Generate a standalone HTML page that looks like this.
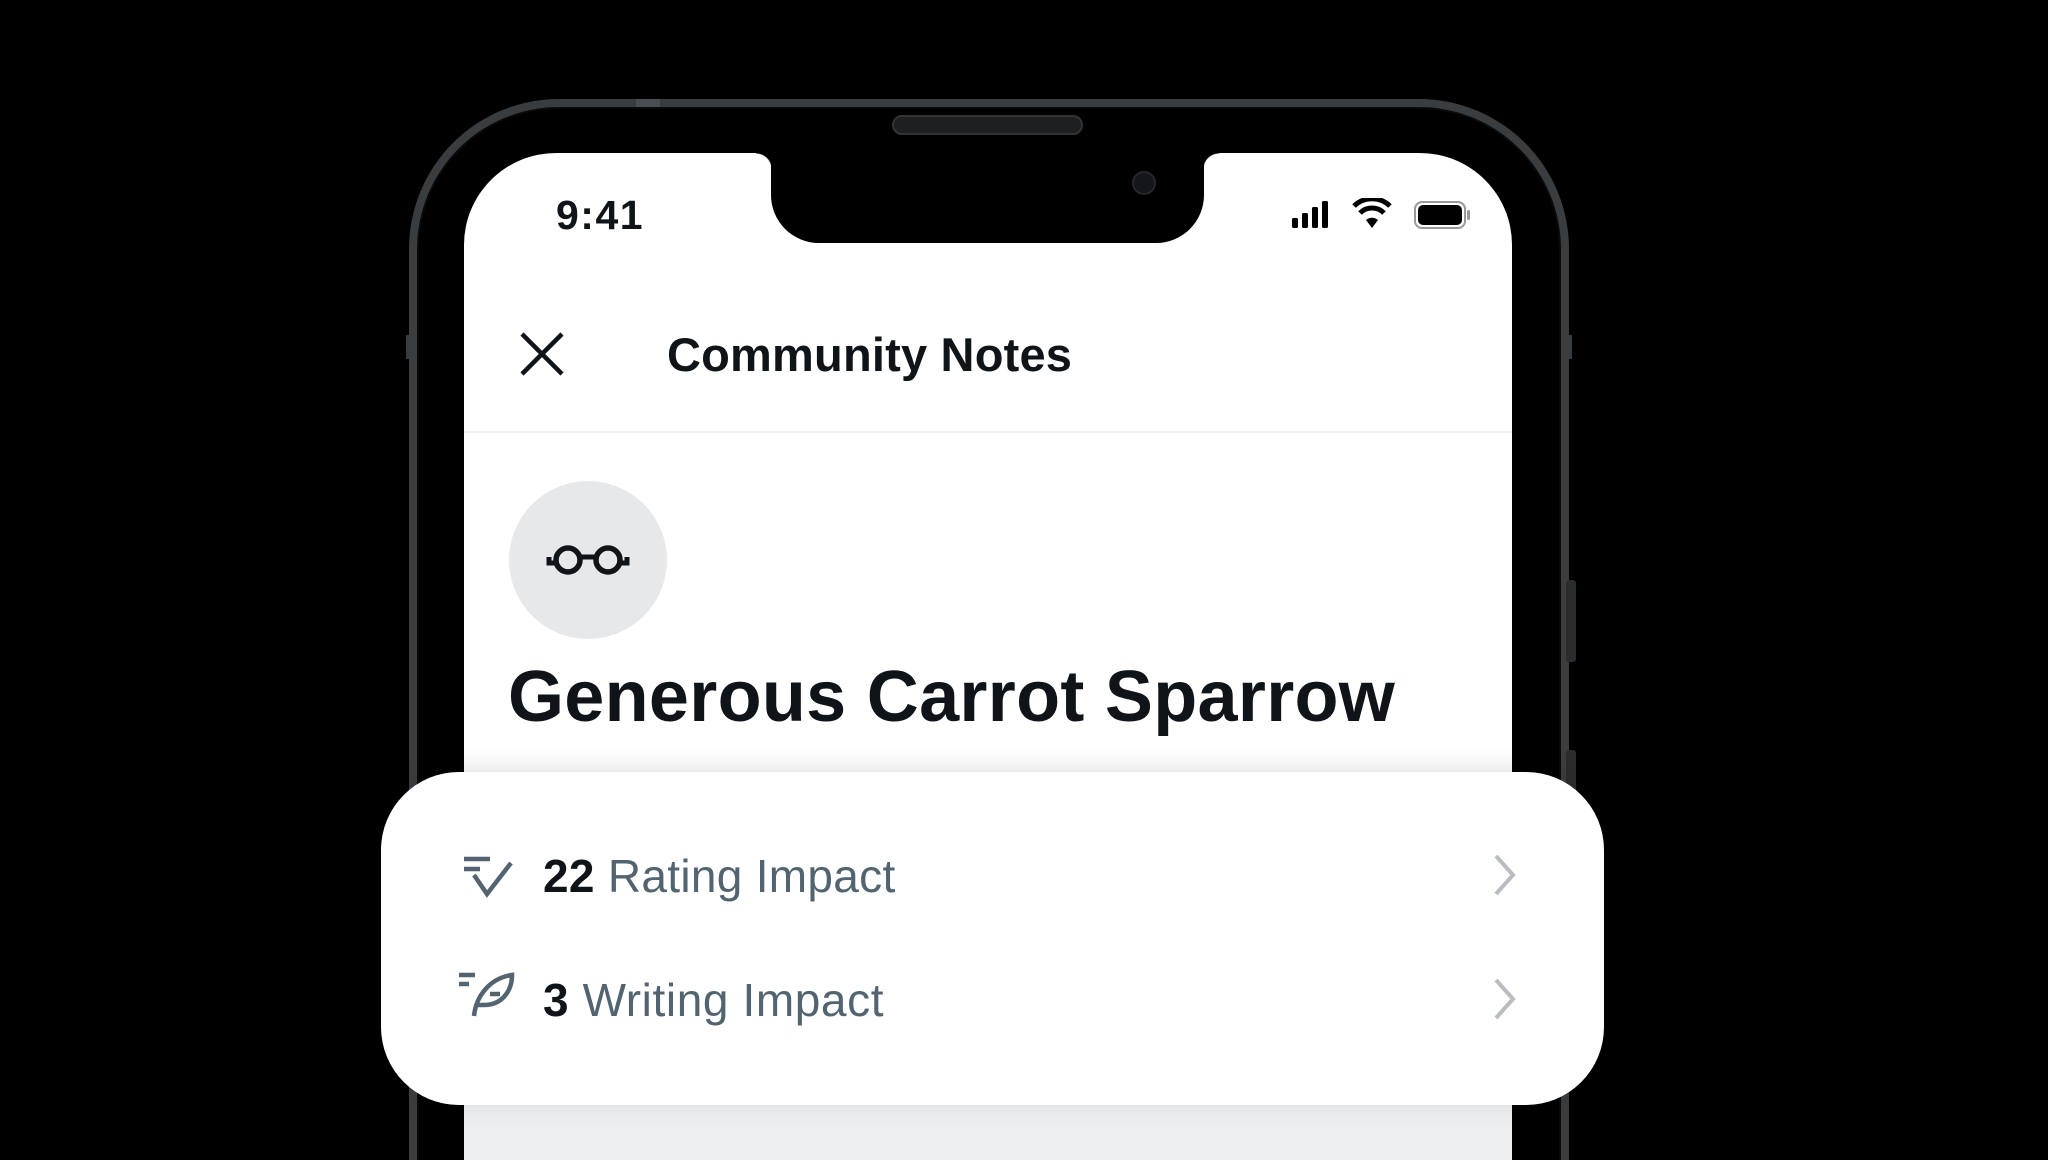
<!DOCTYPE html>
<html style="width:2048px;height:1160px;overflow:hidden"><head><style>
*{margin:0;padding:0;box-sizing:border-box}
body{width:2048px;height:1160px;background:#000;position:relative;overflow:hidden;font-family:"Liberation Sans",sans-serif}
.abs{position:absolute}
</style></head><body>
<div style="position:absolute;left:0;top:0;width:2048px;height:1160px;overflow:hidden">
<div class="abs" style="left:409px;top:99px;width:1160px;height:1061px;border-radius:150px 150px 0 0;background:#1c1d1f;border:8px solid #3a3d40;border-bottom:none;box-shadow:inset 0 0 0 4px #0a0a0a"></div>
<div class="abs" style="left:419px;top:109px;width:1140px;height:1051px;border-radius:140px 140px 0 0;background:#000"></div>
<div class="abs" style="left:1566px;top:580px;width:10px;height:82px;background:#2a2c2e;border-radius:3px"></div>
<div class="abs" style="left:1566px;top:750px;width:10px;height:140px;background:#2a2c2e;border-radius:3px"></div>
<div class="abs" style="left:406px;top:335px;width:8px;height:24px;background:#3a3d40"></div>
<div class="abs" style="left:1564px;top:335px;width:8px;height:24px;background:#3a3d40"></div>
<div class="abs" style="left:636px;top:99px;width:24px;height:8px;background:#4a4e52"></div>
<div class="abs" style="left:464px;top:153px;width:1048px;height:1007px;border-radius:92px 92px 0 0;background:#fff;overflow:hidden">
  <div class="abs" style="left:0;top:600px;width:1048px;height:407px;background:linear-gradient(#fff,#eeeff0 30px,#eeeff0)"></div>
</div>
<div class="abs" style="left:771px;top:140px;width:433px;height:103px;background:#000;border-radius:0 0 48px 48px"></div>
<div class="abs" style="left:756px;top:153px;width:16px;height:16px;background:radial-gradient(circle at 0 100%,transparent 15px,#000 16px)"></div>
<div class="abs" style="left:1203px;top:153px;width:16px;height:16px;background:radial-gradient(circle at 100% 100%,transparent 15px,#000 16px)"></div>
<div class="abs" style="left:892px;top:115px;width:191px;height:20px;border-radius:10px;background:#1e1f21;border:2px solid #333"></div>
<div class="abs" style="left:1132px;top:171px;width:24px;height:24px;border-radius:50%;background:#15161a;border:2px solid #26282c"></div>
<div class="abs" style="left:556px;top:192px;font-size:41px;font-weight:bold;color:#0f1419;letter-spacing:1.5px">9:41</div>
<svg class="abs" style="left:1290px;top:198px" width="190" height="34" viewBox="0 0 190 34">
  <rect x="2" y="20" width="6" height="10" rx="1.5" fill="#000"/><rect x="12" y="15" width="6" height="15" rx="1.5" fill="#000"/><rect x="22" y="9" width="6" height="21" rx="1.5" fill="#000"/><rect x="32" y="3" width="6" height="27" rx="1.5" fill="#000"/>
  <path d="M64 8a26 26 0 0 1 36 0" stroke="#000" stroke-width="5" fill="none"/><path d="M70 15a17 17 0 0 1 24 0" stroke="#000" stroke-width="5" fill="none"/><path d="M76 22l6 8 6-8a9 9 0 0 0-12 0z" fill="#000"/>
  <rect x="125" y="4" width="50" height="26" rx="7" fill="none" stroke="#999" stroke-width="2"/><rect x="128" y="7" width="44" height="20" rx="5" fill="#000"/><rect x="177" y="12" width="3" height="10" rx="1.5" fill="#999"/>
</svg>
<svg class="abs" style="left:519px;top:331px" width="46" height="46" viewBox="0 0 46 46"><path d="M3 3L43 43M43 3L3 43" stroke="#0f1419" stroke-width="4.5"/></svg>
<div class="abs" style="left:667px;top:327px;font-size:47px;font-weight:bold;color:#0f1419;letter-spacing:0.2px">Community Notes</div>
<div class="abs" style="left:464px;top:431px;width:1048px;height:2px;background:#eff3f4"></div>
<div class="abs" style="left:509px;top:481px;width:158px;height:158px;border-radius:50%;background:#e7e8ea"></div>
<svg class="abs" style="left:546px;top:538px" width="84" height="44" viewBox="0 0 84 44">
  <circle cx="22" cy="22" r="12" stroke="#0f1419" stroke-width="5.5" fill="none"/><circle cx="62" cy="22" r="12" stroke="#0f1419" stroke-width="5.5" fill="none"/>
  <path d="M32 19h20M3 19v6h8M81 19v6h-8" stroke="#0f1419" stroke-width="5" fill="none"/>
</svg>
<div class="abs" style="left:508px;top:656px;font-size:72px;font-weight:bold;color:#0f1419;letter-spacing:0.3px">Generous Carrot Sparrow</div>
<div class="abs" style="left:381px;top:772px;width:1223px;height:333px;border-radius:78px;background:#fff;box-shadow:0 0 30px rgba(0,0,0,0.08)"></div>
<svg class="abs" style="left:460px;top:852px" width="56" height="50" viewBox="0 0 56 50">
  <path d="M4 7h26M4 17h16M14 23l13 19 24-31" stroke="#536471" stroke-width="4.5" fill="none"/>
</svg>
<div class="abs" style="left:543px;top:849px;font-size:46px;color:#536471;white-space:nowrap;letter-spacing:0.3px"><b style="color:#0f1419">22</b> Rating Impact</div>
<svg class="abs" style="left:456px;top:968px" width="60" height="54" viewBox="0 0 60 54">
  <path d="M3 7h16M3 16h10M18 48C20 28 34 10 56 7c0 16-10 30-28 30h-8M34 26h10" stroke="#536471" stroke-width="4.5" fill="none"/>
</svg>
<div class="abs" style="left:543px;top:973px;font-size:46px;color:#536471;white-space:nowrap;letter-spacing:0.6px"><b style="color:#0f1419">3</b> Writing Impact</div>
<svg class="abs" style="left:1490px;top:852px" width="30" height="46" viewBox="0 0 30 46"><path d="M6 4l17 19-17 19" stroke="#b9bdc1" stroke-width="4" fill="none"/></svg>
<svg class="abs" style="left:1490px;top:976px" width="30" height="46" viewBox="0 0 30 46"><path d="M6 4l17 19-17 19" stroke="#b9bdc1" stroke-width="4" fill="none"/></svg>
</div>
</body></html>
